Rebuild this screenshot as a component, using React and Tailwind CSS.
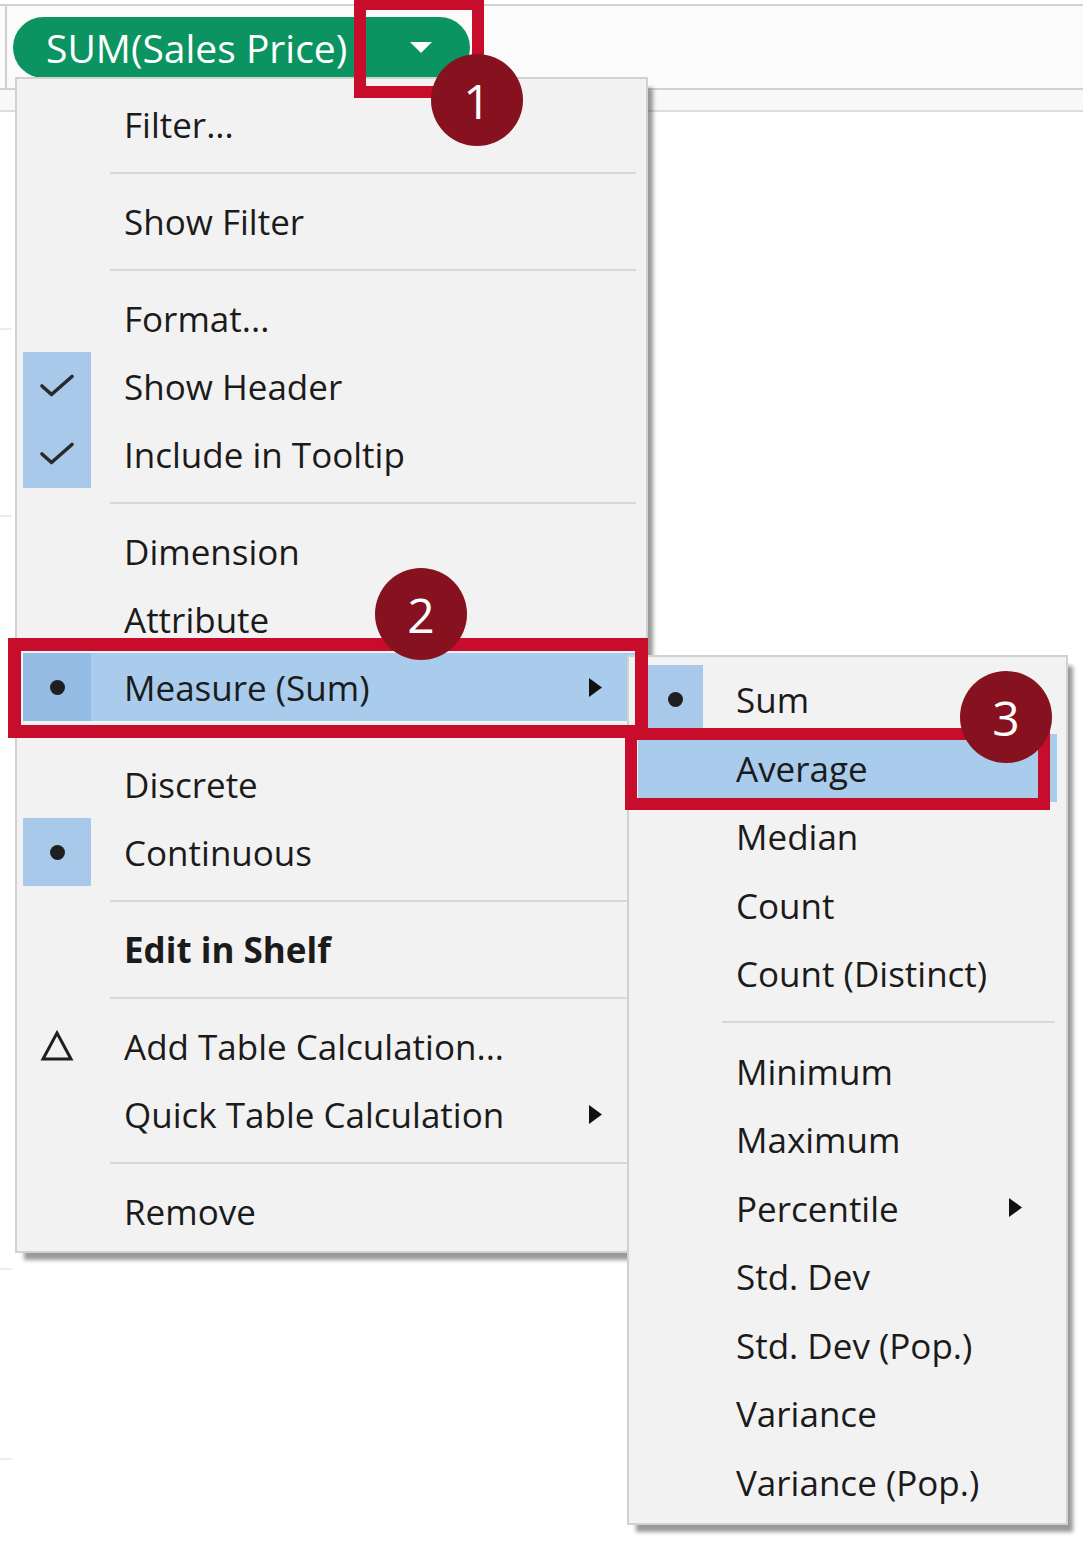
import React from "react";

function Check() {
  return (
    <svg width="36" height="26" viewBox="0 0 36 26">
      <path d="M3 13 L12.5 21.5 L33 3.5" fill="none" stroke="#2a2a2a" strokeWidth="3.6" strokeLinecap="round" strokeLinejoin="round" />
    </svg>
  );
}

function Dot() {
  return <div className="w-[15px] h-[15px] rounded-full bg-[#1f1f1f]" />;
}

function Delta() {
  return (
    <svg width="34" height="32" viewBox="0 0 34 32">
      <path d="M17 3 L31 29 L3 29 Z" fill="none" stroke="#1f1f1f" strokeWidth="3" strokeLinejoin="miter" />
    </svg>
  );
}

function Arrow() {
  return (
    <svg width="13" height="19" viewBox="0 0 13 19">
      <path d="M0 0 L13 9.5 L0 19 Z" fill="#111" />
    </svg>
  );
}

function MainItem({ label, icon, iconBg, hover, bold, arrow }) {
  return (
    <div className={`h-[68px] mx-[6px] flex items-center ${hover ? "bg-[#a9cbec]" : ""}`}>
      <div
        className={`w-[68px] h-full flex items-center justify-center ${
          hover ? "bg-[#93bbe4]" : iconBg ? "bg-[#a9c9ea]" : ""
        }`}
      >
        {icon}
      </div>
      <span className={`pl-[33px] flex-1 text-[35px] leading-none pt-[1px] ${bold ? "font-bold" : ""}`}>{label}</span>
      {arrow && (
        <div className="mr-[38px] flex items-center">
          <Arrow />
        </div>
      )}
    </div>
  );
}

function MainSep() {
  return (
    <div className="h-[29px] flex items-center">
      <div className="ml-[93px] mr-[10px] flex-1 h-[2px] bg-[#d9d8d8]" />
    </div>
  );
}

function SubItem({ label, icon, hover, arrow }) {
  return (
    <div className={`h-[68.5px] mx-[9px] flex items-center ${hover ? "bg-[#a9cbec]" : ""}`}>
      <div className={`ml-[10px] w-[55px] h-full flex items-center justify-center ${icon ? "bg-[#a9c9ea]" : ""}`}>
        {icon}
      </div>
      <span className="pl-[33px] flex-1 text-[35px] leading-none pt-[1px]">{label}</span>
      {arrow && (
        <div className="mr-[35px] flex items-center">
          <Arrow />
        </div>
      )}
    </div>
  );
}

function SubSep() {
  return (
    <div className="h-[29px] flex items-center">
      <div className="ml-[93px] mr-[11px] flex-1 h-[2px] bg-[#d9d8d8]" />
    </div>
  );
}

function Badge({ n, className }) {
  return (
    <div
      className={`absolute w-[92px] h-[92px] rounded-full bg-[#86111f] text-white flex items-center justify-center text-[48px] leading-none ${className}`}
    >
      <span className="pt-[2px]">{n}</span>
    </div>
  );
}

export default function App() {
  return (
    <div className="relative w-[1083px] h-[1541px] overflow-hidden bg-white font-['Open_Sans',sans-serif] text-[#1b1b1b]">
      {/* shelf / toolbar */}
      <div className="h-[4px]" />
      <div className="h-[86px] border-y-2 border-[#d3d2d2] bg-[#fbfbfb] flex">
        <div className="ml-[5px] w-[2px] bg-[#cfcfcf]" />
        <div className="ml-[6px] mt-[11px] h-[61px] w-[457px] rounded-full bg-[#0b9461] flex items-center">
          <span className="pl-[33px] text-white text-[39px] leading-none">SUM(Sales Price)</span>
          <svg className="ml-auto mr-[38px]" width="22" height="11" viewBox="0 0 22 11">
            <path d="M0 0 L22 0 L11 11 Z" fill="#ffffff" />
          </svg>
        </div>
      </div>
      <div className="h-[22px] bg-[#f8f8f8] border-b-2 border-[#dedede]" />

      {/* faint grid ticks on the left */}
      <div className="flex flex-col">
        <div className="mt-[216px] w-[12px] h-[2px] bg-[#ececec]" />
        <div className="mt-[185px] w-[12px] h-[2px] bg-[#ececec]" />
        <div className="mt-[751px] w-[12px] h-[2px] bg-[#ececec]" />
        <div className="mt-[188px] w-[12px] h-[2px] bg-[#ececec]" />
      </div>

      {/* main context menu */}
      <div className="absolute left-[15px] top-[77px] w-[633px] bg-[#f3f2f2] border-2 border-[#d2d1d1] pt-[11px] pb-[6px] shadow-[7px_9px_4px_-2px_rgba(0,0,0,0.4)]">
        <MainItem label="Filter..." />
        <MainSep />
        <MainItem label="Show Filter" />
        <MainSep />
        <MainItem label="Format..." />
        <MainItem label="Show Header" icon={<Check />} iconBg />
        <MainItem label="Include in Tooltip" icon={<Check />} iconBg />
        <MainSep />
        <MainItem label="Dimension" />
        <MainItem label="Attribute" />
        <MainItem label="Measure (Sum)" icon={<Dot />} hover arrow />
        <MainSep />
        <MainItem label="Discrete" />
        <MainItem label="Continuous" icon={<Dot />} iconBg />
        <MainSep />
        <MainItem label="Edit in Shelf" bold />
        <MainSep />
        <MainItem label="Add Table Calculation..." icon={<Delta />} />
        <MainItem label="Quick Table Calculation" arrow />
        <MainSep />
        <MainItem label="Remove" />
      </div>

      {/* submenu */}
      <div className="absolute left-[627px] top-[655px] w-[441px] bg-[#f3f2f2] border-2 border-[#d2d1d1] pt-[8px] pb-[7px] shadow-[7px_9px_4px_-2px_rgba(0,0,0,0.4)]">
        <SubItem label="Sum" icon={<Dot />} />
        <SubItem label="Average" hover />
        <SubItem label="Median" />
        <SubItem label="Count" />
        <SubItem label="Count (Distinct)" />
        <SubSep />
        <SubItem label="Minimum" />
        <SubItem label="Maximum" />
        <SubItem label="Percentile" arrow />
        <SubItem label="Std. Dev" />
        <SubItem label="Std. Dev (Pop.)" />
        <SubItem label="Variance" />
        <SubItem label="Variance (Pop.)" />
      </div>

      {/* callout boxes */}
      <div className="absolute left-[354px] top-[-2px] w-[130px] h-[100px] border-[12px] border-[#c70d2b]" />
      <div className="absolute left-[8px] top-[638px] w-[640px] h-[100px] border-[13px] border-[#c70d2b]" />
      <div className="absolute left-[625px] top-[728px] w-[425px] h-[82px] border-[12px] border-[#c70d2b]" />

      <Badge n="1" className="left-[431px] top-[54px]" />
      <Badge n="2" className="left-[375px] top-[568px]" />
      <Badge n="3" className="left-[960px] top-[671px]" />
    </div>
  );
}
